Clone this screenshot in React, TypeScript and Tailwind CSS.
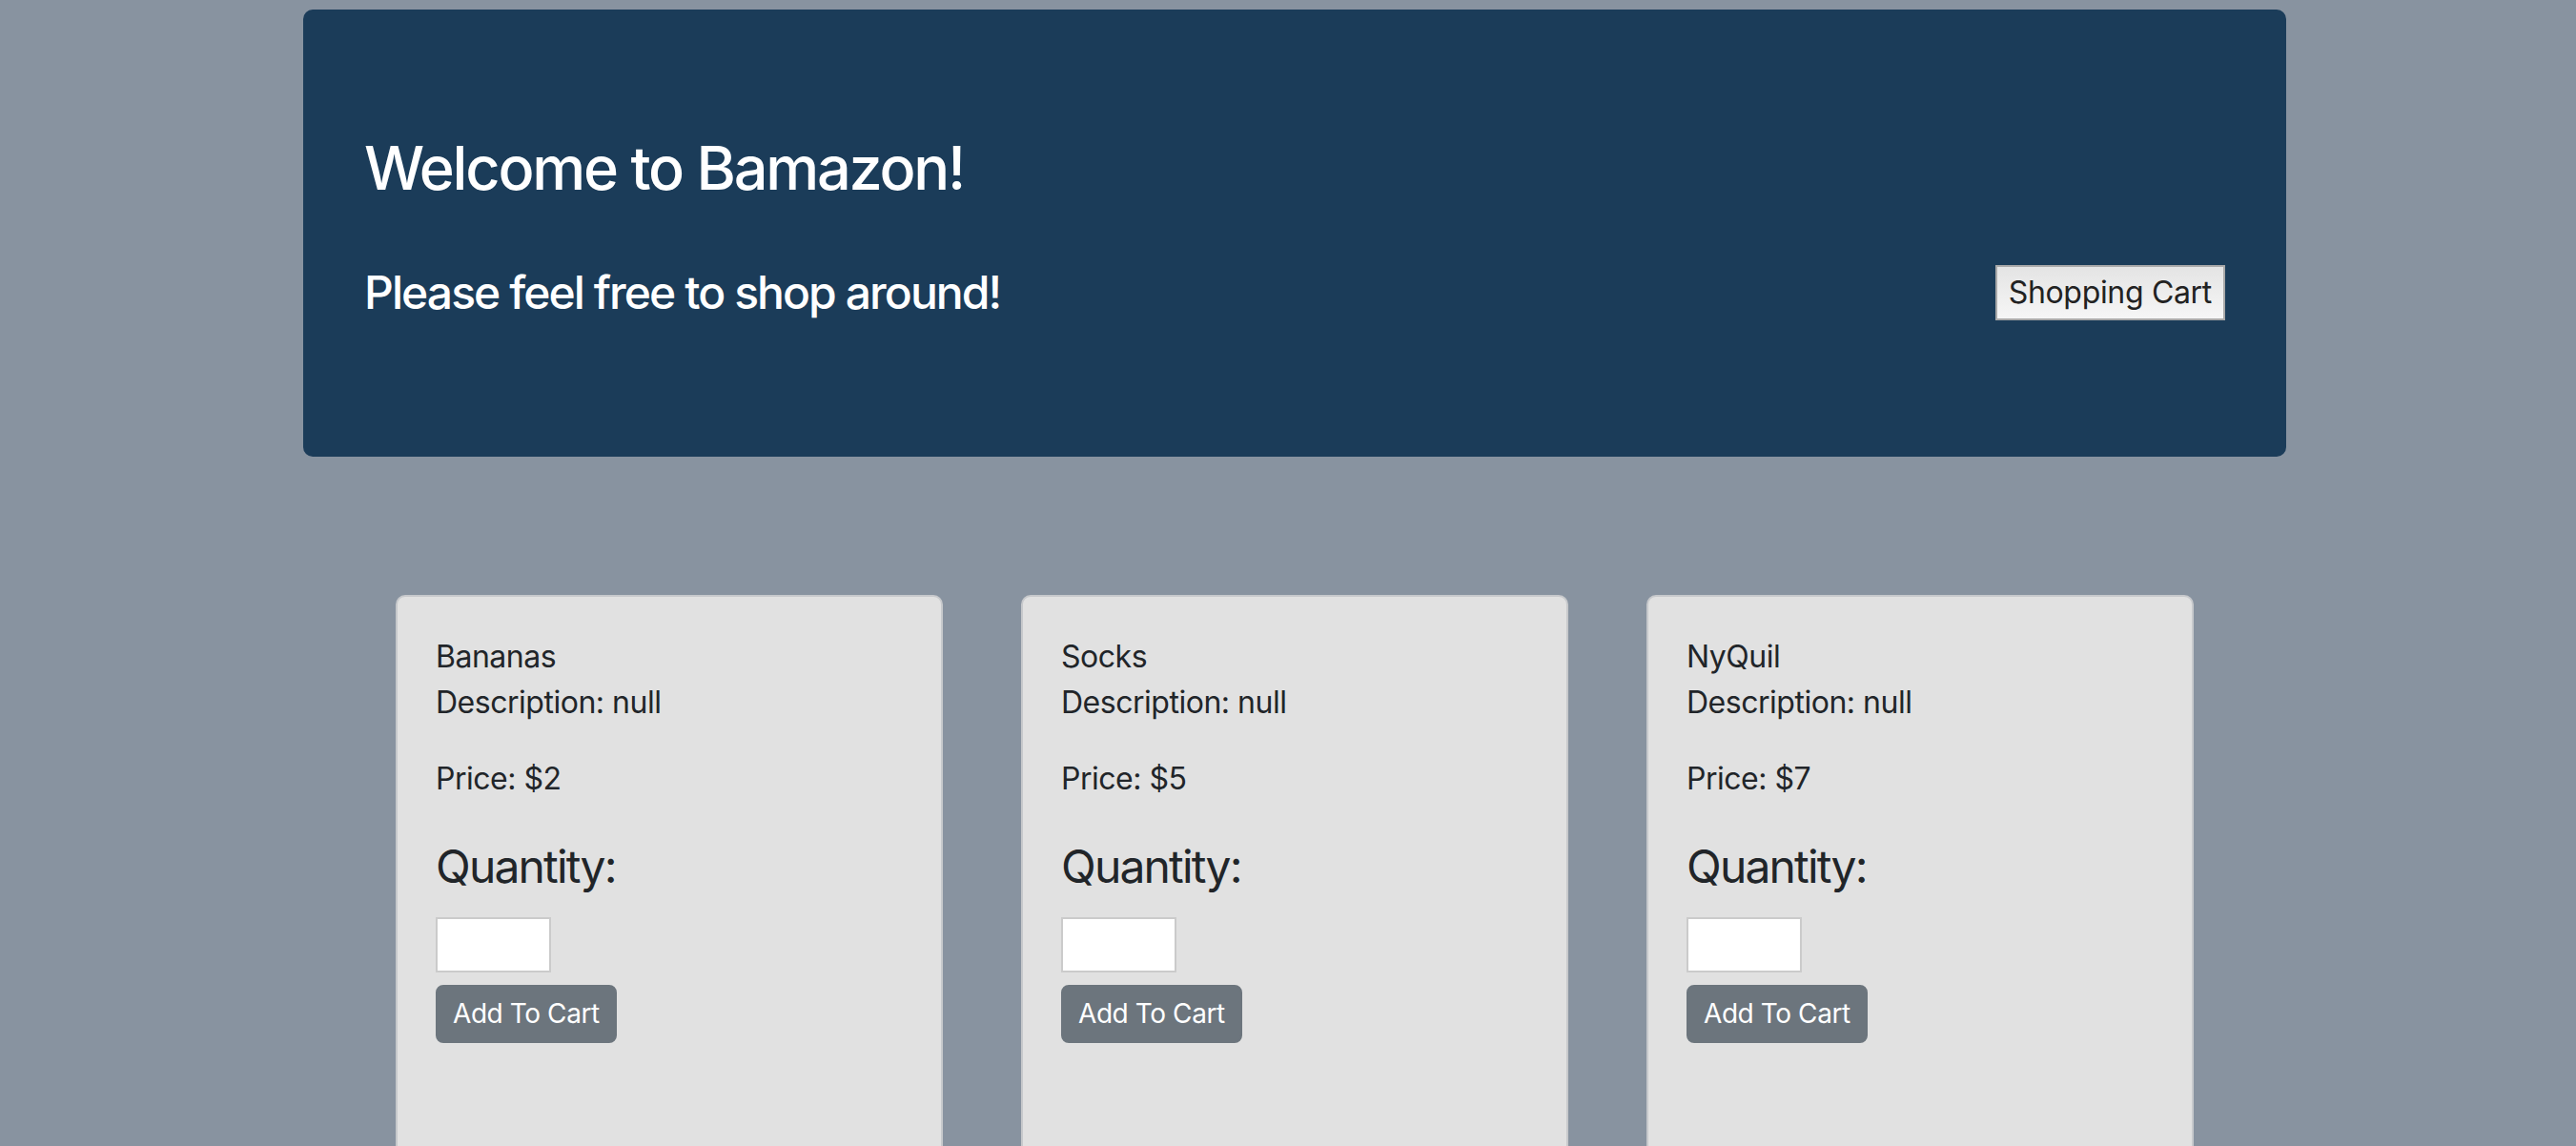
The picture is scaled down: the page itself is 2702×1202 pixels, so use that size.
import React from 'react'

interface Product {
  name: string
  description: string | null
  price: number
}

const products: Product[] = [
  { name: 'Bananas', description: null, price: 2 },
  { name: 'Socks', description: null, price: 5 },
  { name: 'NyQuil', description: null, price: 7 },
]

function ProductCard({ product }: { product: Product }) {
  return (
    <div className="w-[574px] h-[700px] shrink-0 rounded-[10px] border-2 border-[#c7c9cc] bg-[#e1e1e1] px-[40px] pt-[39px] text-[#212529] tracking-[-0.03em]">
      <p className="text-[32px] leading-[48px] mb-[32px]">
        {product.name}
        <br />
        Description: {String(product.description)}
      </p>
      <p className="text-[32px] leading-[48px] mb-[32px]">Price: ${product.price}</p>
      <div className="text-[48px] leading-[72px] tracking-[-0.038em]">Quantity:</div>
      <input
        type="text"
        className="block mt-[17px] w-[121px] h-[58px] border-2 border-[#cbcbcb] bg-white outline-none"
      />
      <button className="block mt-[13px] h-[61px] px-[16px] rounded-[8px] border-2 border-[#6c757d] bg-[#6c757d] text-white text-[28px] leading-[42px] tracking-[-0.015em]">
        Add To Cart
      </button>
    </div>
  )
}

export default function App() {
  return (
    <div className="h-[1202px] overflow-hidden bg-[#8893a0] font-['Inter',sans-serif]">
      {/* Jumbotron */}
      <div className="ml-[318px] w-[2080px] pt-[10px]">
        <header className="rounded-[10px] bg-[#1b3c59] px-[64px] pt-[128px] pb-[143px] text-white">
          <h2 className="text-[63px] leading-[76.8px] font-medium tracking-[-0.035em] mb-[63px]">Welcome to Bamazon!</h2>
          <div className="flex items-center justify-between">
            <h4 className="text-[48px] leading-[57.6px] font-medium tracking-[-0.04em]">Please feel free to shop around!</h4>
            <button className="h-[58px] px-[12px] border-2 border-[#a9a9a9] bg-gradient-to-b from-[#e4e4e4] to-[#f6f6f6] text-[32px] leading-none text-[#222] tracking-[-0.01em]">
              Shopping Cart
            </button>
          </div>
        </header>
      </div>

      {/* Products */}
      <div className="ml-[415px] mt-[145px] flex gap-[82px]">
        {products.map((p) => (
          <ProductCard key={p.name} product={p} />
        ))}
      </div>
    </div>
  )
}
